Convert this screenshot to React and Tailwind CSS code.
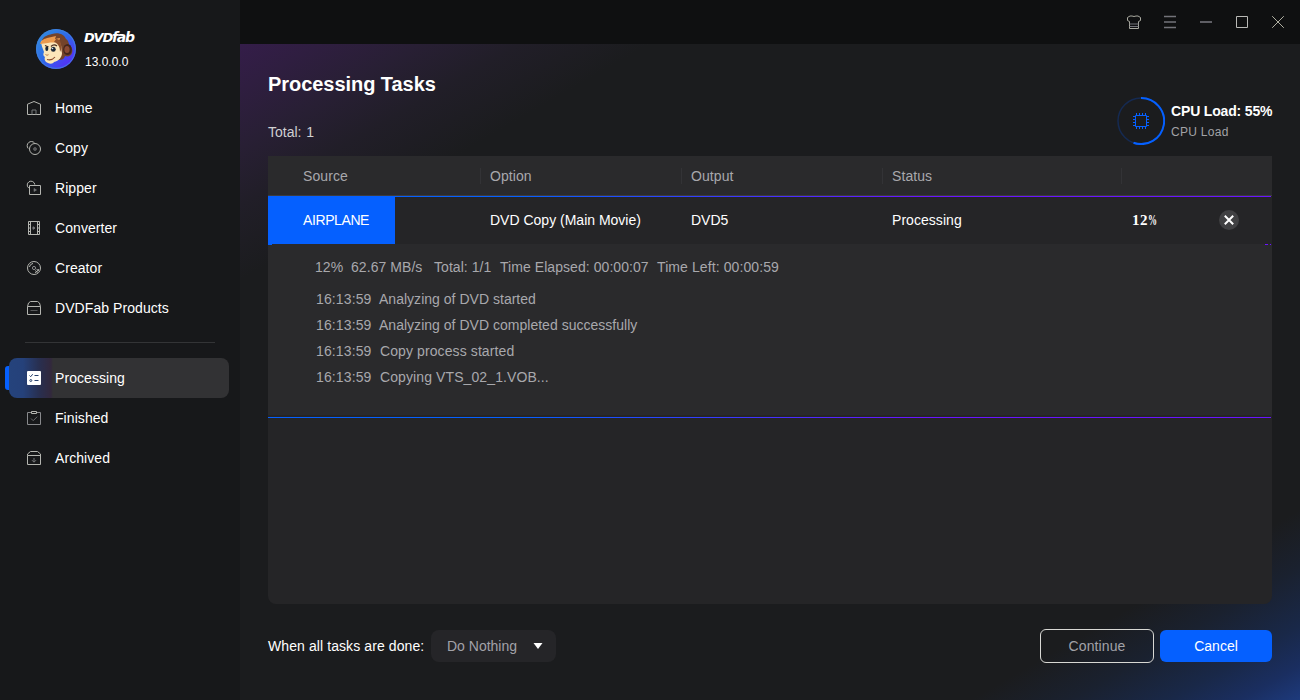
import React from 'react';
import clsx from 'clsx';

function Icon({ children, className }) {
  return (
    <svg
      viewBox="0 0 16 16"
      fill="none"
      stroke="currentColor"
      className={clsx('w-4 h-4 flex-shrink-0', className)}
    >
      {children}
    </svg>
  );
}

const HomeIcon = () => (
  <Icon>
    <path d="M1.5 4.2 8 1.5l6.5 2.7v10.3h-13z" />
    <path d="M6 14.5v-4.5h4v4.5" stroke="#77787a" />
  </Icon>
);

const CopyIcon = () => (
  <Icon>
    <path d="M2.2 8.5A3.8 3.8 0 1 1 8.6 3" />
    <circle cx="9" cy="9" r="5.5" />
    <circle cx="9" cy="9" r="1.5" fill="#58595b" stroke="#58595b" />
  </Icon>
);

const RipperIcon = () => (
  <Icon>
    <path d="M3 8.2A3.8 3.8 0 1 1 8.8 4.6" />
    <path d="M3.5 5.5h11v9h-11z" />
    <path d="M8 8.5v3l2.5-1.5z" fill="#77787a" stroke="#77787a" strokeWidth="0.6" />
  </Icon>
);

const ConverterIcon = () => (
  <Icon>
    <path d="M2.5 1.5h11v13h-11zM4.5 1.5v13M11.5 1.5v13" />
    <path d="M2.5 4.5h2m-2 3.5h2m-2 3.5h2M11.5 4.5h2m-2 3.5h2m-2 3.5h2" />
    <path d="M7 6.8v2.5l2-1.25z" fill="#77787a" stroke="#77787a" />
  </Icon>
);

const CreatorIcon = () => (
  <Icon>
    <circle cx="8" cy="8" r="6.5" />
    <circle cx="8" cy="8" r="1.6" stroke="#8a8b8c" />
    <path d="M3.4 7A4.7 4.7 0 0 1 7 3.4M12.6 9A4.7 4.7 0 0 1 9 12.6M9.300 10.500l2.200 2M10.500 9.300l2.400 1.500" />
  </Icon>
);

const ProductsIcon = () => (
  <Icon>
    <path d="M1.5 6.5 2.5 3l2-1.5h7l2 1.5 1 3.5v8h-13zM1.5 6.5h13" />
    <path d="M4.5 10.5h7" stroke="#58595b" />
  </Icon>
);

const ProcessingIcon = () => (
  <Icon>
    <rect x="1" y="1" width="14" height="14" rx="1" fill="#fff" stroke="none" />
    <path d="m3.5 5.5 1.2 1.2 2-2.5M8.5 5.5h4M8.5 10.5h4" stroke="#27406c" />
    <circle cx="4.8" cy="10.5" r="1" stroke="#27406c" />
  </Icon>
);

const FinishedIcon = () => (
  <Icon>
    <path d="M5 2.5H1.5v12h13v-12H11" stroke="#88898c" />
    <path d="M5.5 1.5h5v2h-5z" />
    <path d="m5 8.5 2.2 2.2 4-4" stroke="#68696b" />
  </Icon>
);

const ArchivedIcon = () => (
  <Icon>
    <path d="M1.5 5.500v-1.500l3-2.500h7l3 2.500v10.500h-13zM1.500 5.500h13" />
    <path d="M8 8v4m-2-1.800 2 2 2-2" stroke="#77787a" />
  </Icon>
);

const mainMenu = [
  { name: 'Home', icon: HomeIcon },
  { name: 'Copy', icon: CopyIcon },
  { name: 'Ripper', icon: RipperIcon },
  { name: 'Converter', icon: ConverterIcon },
  { name: 'Creator', icon: CreatorIcon },
  { name: 'DVDFab Products', icon: ProductsIcon },
];

const taskMenu = [
  { name: 'Processing', icon: ProcessingIcon, active: true },
  { name: 'Finished', icon: FinishedIcon },
  { name: 'Archived', icon: ArchivedIcon },
];

const logs = [
  { time: '16:13:59', text: 'Analyzing of DVD started' },
  { time: '16:13:59', text: 'Analyzing of DVD completed successfully' },
  { time: '16:13:59', text: 'Copy process started' },
  { time: '16:13:59', text: 'Copying VTS_02_1.VOB...' },
];

function Mascot() {
  return (
    <svg viewBox="0 0 40 40" className="w-10 h-10 flex-shrink-0">
      <defs>
        <linearGradient id="disc" x1="0" y1="0" x2="1" y2="1">
          <stop offset="0" stopColor="#2f96dc" />
          <stop offset="0.5" stopColor="#2f66ea" />
          <stop offset="1" stopColor="#6418ff" />
        </linearGradient>
      </defs>
      <circle cx="20" cy="20" r="20" fill="url(#disc)" />
      <circle cx="20" cy="20" r="19.3" fill="none" stroke="#3f80dc" />
      {/* fur */}
      <path
        d="M6 11c2-4 6-5 10-6 6-2 12 0 14 5 2 1 3 4 3 6 3 2 4 5 3 8-1 3-4 4-7 3-1 3-3 4-6 4l-8-6z"
        fill="#74432a"
      />
      {/* face */}
      <path
        d="M5 12c4 0 8-1 11-1 4 0 7 1 8 3 2 3 1 6 2 10 0 4-3 8-8 9-1 2-4 2-6 1-3-1-4-4-3-6-2-1-2-3-1-5-1-3-3-7-3-11z"
        fill="#fce6ba"
      />
      {/* brow tuft */}
      <path d="M4 15c1-4 4-5 7-6l9-2-1 3 5-1c0 2-2 4-4 4-3 1-5 0-8 1-3 0-5 1-8 1z" fill="#eb9a4e" />
      <path d="M20 10c3 0 5 2 5 6 1 3 0 5-1 7 0-4-1-8-6-10z" fill="#8f512c" />
      {/* ear */}
      <ellipse cx="31.5" cy="20.5" rx="4.3" ry="5.5" fill="#43251b" />
      <ellipse cx="31" cy="20.5" rx="2.6" ry="3.6" fill="#8a4a33" />
      <path d="M9 16.500l3.500 1.500M15 17.500c2-2 4-2 6-.5" stroke="#4a2b1c" strokeWidth="1.200" fill="none" />
      <ellipse cx="10.800" cy="19.800" rx="1.500" ry="2.300" fill="#1c2836" />
      <ellipse cx="17.300" cy="20.300" rx="2.400" ry="2.500" fill="#1c2836" />
      <circle cx="16.500" cy="19.500" r="0.800" fill="#dfe8f4" />
      <path d="M9.500 25.500c1 .8 2 .8 3 .2" stroke="#b47446" fill="none" />
      <path d="M11 30.500c3 .8 6 0 8-2.500" stroke="#8c4a2c" strokeWidth="1.100" fill="none" />
    </svg>
  );
}

function MenuItem({ item }) {
  const ItemIcon = item.icon;
  return (
    <div className="relative h-10 px-2">
      {item.active && <span className="absolute left-[5px] top-2 h-6 w-3 rounded-[3px] bg-[#0560ff]" />}
      <div
        className={clsx(
          'relative ml-[1px] mr-[3px] h-10 flex items-center gap-[13px] pl-[17px] rounded-lg text-sm text-white',
          item.active &&
            'bg-[#323234] bg-[linear-gradient(90deg,#25437c_0px,#25417a_14px,#282f50_30px,#32283c_42px,#323234_44px)]'
        )}
      >
        <span className="text-[#b4b5b0] flex">
          <ItemIcon />
        </span>
        <span className="tracking-[0.07px]">{item.name}</span>
      </div>
    </div>
  );
}

function Sidebar() {
  return (
    <aside className="w-60 flex-shrink-0 bg-[#17181a]">
      <div className="flex h-[88px] pt-[29px] pl-9 gap-2">
        <Mascot />
        <div className="text-white">
          <div className="h-[19px] font-['DejaVu_Sans'] text-[13px] leading-[17px] font-bold italic whitespace-nowrap">
            <span className="tracking-[-1.2px]">DVD</span>
            <span className="text-sm leading-[17px] tracking-[-1.3px]">fab</span>
          </div>
          <div className="pl-[1px] pt-[6px] text-xs leading-[16px]">13.0.0.0</div>
        </div>
      </div>
      <nav>
        {mainMenu.map((item) => (
          <MenuItem key={item.name} item={item} />
        ))}
      </nav>
      <div className="mx-[25px] mt-[14px] mb-[15px] h-px bg-[#333436]" />
      <nav>
        {taskMenu.map((item) => (
          <MenuItem key={item.name} item={item} />
        ))}
      </nav>
    </aside>
  );
}

function TitleBar() {
  return (
    <header className="h-11 flex-shrink-0 bg-[#0f1011] flex items-center justify-end gap-5 pr-[14px] text-[#a9a9a0]">
      <Icon>
        <path d="M3.500 14.500V7.500L1.500 6.500v-3l2.500-1.500h2l2 .5 2-.5h2l2.500 1.500v3l-2 1v7z" />
        <path d="M3.500 10h9M3.500 12.500h9" stroke="#73737a" />
      </Icon>
      <Icon className="text-[#73737a]">
        <path d="M2 2.500h12M2 8h12M2 13.500h12" strokeWidth="1.400" />
      </Icon>
      <Icon className="text-[#73737a]">
        <path d="M2 8h12" strokeWidth="1.600" />
      </Icon>
      <Icon className="text-[#b9b9b6]">
        <path d="M2.500 2.500h11v11h-11z" />
      </Icon>
      <Icon className="text-[#b0b0a2]">
        <path d="m2.200 2.200 11.600 11.600M13.800 2.200 2.200 13.800" />
      </Icon>
    </header>
  );
}

function CpuLoad() {
  return (
    <div className="flex gap-1.5 pt-[53px]">
      <svg viewBox="0 0 48 48" fill="none" className="w-12 h-12">
        <circle cx="24" cy="24" r="23" stroke="#152a52" strokeWidth="1.500" />
        <path d="M24 1a23 23 0 1 1-7.500 44.700" stroke="#0560ff" strokeWidth="2" />
        <path d="M18.500 18.500h11v11h-11z" stroke="#0560ff" />
        <path
          d="M19.500 16v2m3-2v2m3-2v2m3-2v2M19.500 30v2m3-2v2m3-2v2m3-2v2M16 19.500h2m-2 3h2m-2 3h2m-2 3h2M30 19.500h2m-2 3h2m-2 3h2m-2 3h2"
          stroke="#0560ff"
        />
      </svg>
      <div className="w-[101px] pt-1">
        <div className="text-sm leading-5 font-bold text-white whitespace-nowrap tracking-[-0.16px]">
          CPU Load: 55%
        </div>
        <div className="pt-px text-xs leading-5 text-[#a2a2a6] tracking-[0.3px]">CPU Load</div>
      </div>
    </div>
  );
}

function TaskTable() {
  return (
    <div className="h-[448px] rounded-b-lg bg-[#252527] text-sm overflow-hidden">
      <div className="h-10 grid grid-cols-[212px_201px_201px_239px_151px] items-center bg-[#2a2a2c] text-[#a8a8ac] border-b border-[#3c3c40]">
        <span className="pl-[35px] tracking-[0.1px]">Source</span>
        {['Option', 'Output', 'Status', ''].map((name) => (
          <span key={name} className="h-4 leading-4 pl-[9px] border-l border-[#333336] tracking-[0.08px]">
            {name}
          </span>
        ))}
      </div>

      <div className="relative h-12 grid grid-cols-[212px_201px_201px_240px_150px] items-center text-white">
        <div className="absolute inset-y-0 left-0 w-[127px] bg-[#0560ff]" />
        <div className="absolute top-0 left-0 right-px h-px bg-[linear-gradient(90deg,#0560ff_0%,#0560ff_25%,#6a14ff_65%,#6a14ff_100%)]" />
        <span className="relative pl-[35px] tracking-[-0.4px]">AIRPLANE</span>
        <span className="pl-[10px]">DVD Copy (Main Movie)</span>
        <span className="pl-[10px]">DVD5</span>
        <span className="pl-[10px] tracking-[0.05px]">Processing</span>
        <div className="flex items-center pl-[10px]">
          <span className="w-[87px] pt-[2px] font-['Liberation_Serif'] text-[15px] font-bold whitespace-nowrap tracking-[0.5px]">
            12<span className="inline-block origin-left scale-x-[0.6]">%</span>
          </span>
          <button className="w-5 h-5 rounded-full bg-[#414143] flex items-center justify-center">
            <svg viewBox="0 0 10 10" className="w-2.5 h-2.5" stroke="#fff" strokeWidth="2">
              <path d="m.8.8 8.400 8.400M9.200.8.800 9.200" />
            </svg>
          </button>
        </div>
      </div>

      <div className="h-[171px] bg-[#2a2a2c] text-[#a8a8ac]">
        <div className="flex h-px pr-px">
          <span className="w-1 bg-[#0560ff]" />
          <span className="ml-auto w-[3px] bg-[#6a14ff]" />
          <span className="ml-[2px] w-px bg-[#6a14ff]" />
        </div>
        <div className="flex pt-[9px] pl-12 leading-[26px] whitespace-nowrap tracking-[0.06px]">
          <span className="w-[36px] -ml-[1px]">12%</span>
          <span className="w-[83px]">62.67 MB/s</span>
          <span className="w-[66px]">Total: 1/1</span>
          <span className="w-[157px]">Time Elapsed: 00:00:07</span>
          <span className="tracking-[0.1px]">Time Left: 00:00:59</span>
        </div>
        <div className="pt-[6px] pl-12">
          {logs.map((log) => (
            <div key={log.text} className="flex leading-[26px]">
              <span className="w-[63px] tracking-[0.12px]">{log.time}</span>
              <span className={clsx(log.text.startsWith('Copy') ? 'pl-px tracking-[0.1px]' : 'tracking-[0.02px]')}>
                {log.text}
              </span>
            </div>
          ))}
        </div>
      </div>
      <div className="mt-[2px] mr-px h-px bg-[linear-gradient(90deg,#0560ff_0%,#0560ff_25%,#6a14ff_65%,#6a14ff_100%)]" />
    </div>
  );
}

function Footer() {
  return (
    <footer className="flex items-center pt-[25px] text-sm">
      <span className="text-white w-[163px] whitespace-nowrap tracking-[0.09px]">When all tasks are done:</span>
      <button className="h-8 w-[125px] pl-4 pr-[13px] rounded-lg bg-[#252528] text-[#a2a2a8] flex items-center justify-between">
        Do Nothing
        <svg viewBox="0 0 10 6" className="w-[10px] h-[6px]" fill="#fff">
          <path d="M.5 0h9L5 6z" />
        </svg>
      </button>
      <button className="ml-auto h-[34px] w-[114px] rounded-md border border-[#d8d8d4] text-[#a2a2a8] tracking-[0.1px]">
        Continue
      </button>
      <button className="ml-1.5 h-8 w-[112px] rounded-md bg-[#0560ff] text-white">Cancel</button>
    </footer>
  );
}

export default function App() {
  return (
    <div className="w-[1300px] h-[700px] flex overflow-hidden font-['Liberation_Sans',Arial,sans-serif]">
      <Sidebar />
      <div className="flex-1 flex flex-col">
        <TitleBar />
        <main className="flex-1 px-7 bg-[#1b1c1e] bg-[linear-gradient(150deg,#341d49_0px,#2f1e40_40px,#281f34_90px,#211e28_140px,transparent_205px),linear-gradient(150deg,transparent_calc(100%_-_165px),#1a212f_calc(100%_-_115px),#192848_calc(100%_-_65px),#1a2e60_calc(100%_-_30px),#1d3a7c_100%)]">
          <div className="h-28 flex justify-between">
            <div>
              <h1 className="pt-[26px] text-xl leading-7 font-bold text-white tracking-[-0.05px]">Processing Tasks</h1>
              <p className="pt-6 text-sm leading-5 text-[#d0d0d2]">
                Total: <span className="ml-[1px]">1</span>
              </p>
            </div>
            <CpuLoad />
          </div>
          <TaskTable />
          <Footer />
        </main>
      </div>
    </div>
  );
}
